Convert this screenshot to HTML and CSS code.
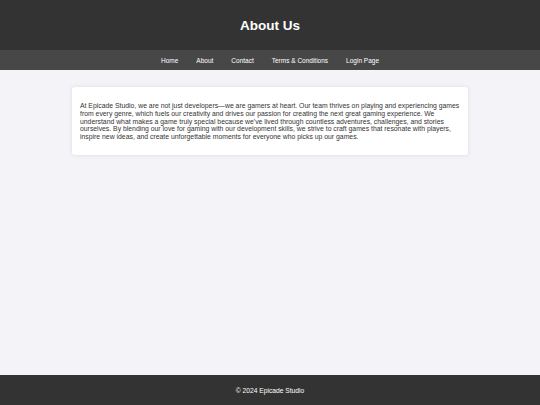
FILE: index.html
```html
<!DOCTYPE html>
<html lang="en">
<head>
<meta charset="UTF-8">
<title>About Us</title>
<link rel="stylesheet" href="styles.css">
</head>
<body>
<div class="page">
  <header class="site-header">
    <h1 class="site-title">About Us</h1>
  </header>
  <nav class="site-nav">
    <a href="#">Home</a>
    <a href="#">About</a>
    <a href="#">Contact</a>
    <a href="#">Terms &amp; Conditions</a>
    <a href="#">Login Page</a>
  </nav>
  <main class="content">
    <section class="card">
      <p>At Epicade Studio, we are not just developers—we are gamers at heart. Our team thrives on playing and experiencing games from every genre, which fuels our creativity and drives our passion for creating the next great gaming experience. We understand what makes a game truly special because we've lived through countless adventures, challenges, and stories ourselves. By blending our love for gaming with our development skills, we strive to craft games that resonate with players, inspire new ideas, and create unforgettable moments for everyone who picks up our games.</p>
    </section>
  </main>
  <footer class="site-footer">© 2024 Epicade Studio</footer>
</div>
</body>
</html>
```
FILE: styles.css
```css
* { box-sizing: border-box; }
html, body { margin: 0; padding: 0; }
body {
  font-family: "Liberation Sans", Arial, sans-serif;
  background: #f4f4f8;
  color: #333;
}
.page {
  min-height: 100vh;
  display: flex;
  flex-direction: column;
}
.site-header {
  background: #333;
  color: #fff;
  height: 50px;
  display: flex;
  align-items: center;
  justify-content: center;
}
.site-title {
  margin: 0;
  font-size: 13.5px;
  font-weight: bold;
}
.site-nav {
  background: #474747;
  height: 20px;
  display: flex;
  align-items: center;
  justify-content: center;
  gap: 18px;
}
.site-nav a {
  color: #fff;
  text-decoration: none;
  font-size: 6.5px;
}
.content {
  flex: 1;
  padding-top: 17px;
}
.card {
  width: 396px;
  margin: 0 auto;
  background: #fff;
  border-radius: 3px;
  box-shadow: 0 0 4px rgba(0,0,0,0.1);
  padding: 8px 8px 7px;
}
.card p {
  margin: 7px 0;
  font-size: 6.85px;
  line-height: 7.75px;
  color: #333;
}
.site-footer {
  background: #333;
  color: #fff;
  height: 30px;
  display: flex;
  align-items: center;
  justify-content: center;
  font-size: 6.7px;
}
```
